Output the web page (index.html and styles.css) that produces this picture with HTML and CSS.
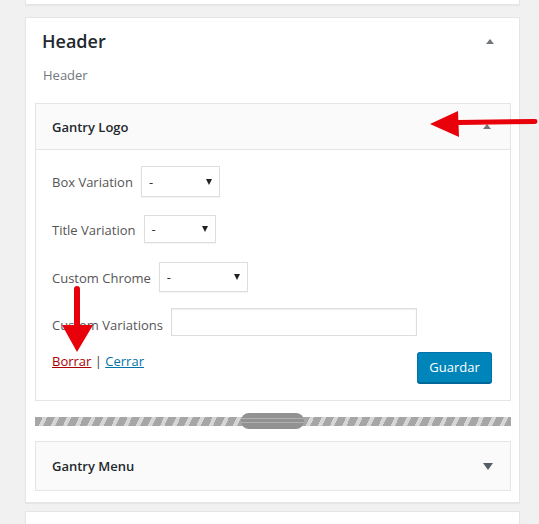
FILE: index.html
```html
<!DOCTYPE html>
<html lang="es">
<head>
<meta charset="UTF-8" />
  <meta name="viewport" content="width=device-width, initial-scale=1.0"/>
  <title>Widgets | Header</title>
  <link rel="stylesheet" href="styles.css">
</head>
<body>
<div class="page">
  <div class="sidebar">
    <div class="panel panel-stub"></div>

    <div class="panel panel-main">
      <div class="panel-head">
        <h2>Header</h2>
        <span class="arrow-up"></span>
      </div>
      <p class="panel-desc">Header</p>

      <div class="widget">
        <div class="widget-head">
          <h3>Gantry Logo</h3>
          <span class="arrow-up"></span>
        </div>
        <div class="widget-body">
          <div class="field row-1">
            <label>Box Variation</label>
            <div class="select sel-box"><span>-</span><span class="caret"></span></div>
          </div>
          <div class="field row-2">
            <label>Title Variation</label>
            <div class="select sel-title"><span>-</span><span class="caret"></span></div>
          </div>
          <div class="field row-3">
            <label>Custom Chrome</label>
            <div class="select sel-chrome"><span>-</span><span class="caret"></span></div>
          </div>
          <div class="field row-4">
            <label class="low">Custom Variations</label>
            <input type="text" class="text-input">
          </div>
          <div class="actions">
            <div class="links">
              <a href="#" class="delete">Borrar</a> | <a href="#" class="close">Cerrar</a>
            </div>
            <button class="button-primary">Guardar</button>
          </div>
        </div>
      </div>

      <div class="drop-bar"><span class="handle"></span></div>

      <div class="widget">
        <div class="widget-head closed">
          <h3>Gantry Menu</h3>
          <span class="arrow-down"></span>
        </div>
      </div>
    </div>

    <div class="panel panel-next"></div>
  </div>

  <!-- annotation arrows drawn over the screenshot -->
  <svg class="annotations" width="539" height="524" viewBox="0 0 539 524">
    <line x1="458" y1="122.5" x2="535" y2="121.5" stroke="#e8000b" stroke-width="5" stroke-linecap="round"/>
    <polygon points="430,124 458,111 459,137" fill="#e8000b"/>
    <line x1="77" y1="289" x2="77" y2="328" stroke="#e8000b" stroke-width="6" stroke-linecap="round"/>
    <polygon points="62,325 93,325 77,352" fill="#e8000b"/>
  </svg>
</div>
</body>
</html>
```

FILE: styles.css
```css
* {
  box-sizing: border-box;
}
body {
  margin: 0;
  background: #f1f1f1;
  font-family: "Open Sans", "Noto Sans", sans-serif;
  font-size: 13px;
  color: #444;
}
.page {
  position: relative;
  width: 539px;
  height: 524px;
  overflow: hidden;
}
.sidebar {
  margin-left: 25px;
  width: 495px;
}
.panel {
  background: #fff;
  border: 1px solid #e5e5e5;
  box-shadow: 0 1px 1px rgba(0,0,0,0.04);
}
.panel-stub {
  height: 5px;
  border-top: none;
}
.panel-main {
  margin-top: 12px;
  padding: 11px 8px 11px 9px;
}
.panel-next {
  margin-top: 8px;
  height: 40px;
}
.panel-head {
  display: flex;
  justify-content: space-between;
  align-items: center;
  padding: 0 17px 0 7px;
}
.panel-head h2 {
  margin: 0;
  font-size: 18px;
  line-height: 25px;
  font-weight: 600;
  color: #23282d;
}
.panel-desc {
  margin: 11px 0 0;
  padding-left: 8px;
  line-height: 20px;
  color: #72777c;
}
.arrow-up {
  width: 0;
  height: 0;
  border-left: 4px solid transparent;
  border-right: 4px solid transparent;
  border-bottom: 5px solid #72777c;
}
.arrow-down {
  width: 0;
  height: 0;
  border-left: 5px solid transparent;
  border-right: 5px solid transparent;
  border-top: 7px solid #555d66;
}
.widget {
  margin-top: 18px;
  border: 1px solid #e5e5e5;
  background: #fff;
}
.widget-head {
  display: flex;
  justify-content: space-between;
  align-items: center;
  height: 46px;
  padding: 0 19px 0 16px;
  background: #fafafa;
  border-bottom: 1px solid #e5e5e5;
}
.widget-head.closed {
  height: 48px;
  border-bottom: none;
  padding-right: 17px;
}
.widget-head h3 {
  margin: 0;
  font-size: 13px;
  font-weight: 600;
  color: #23282d;
}
.widget-body {
  padding: 16px 18px 17px 16px;
}
.field {
  display: flex;
  align-items: center;
  gap: 8px;
}
.field label {
  color: #555;
  padding-top: 1px;
}
.field label.low {
  padding-top: 6px;
}
.row-1 { height: 31px; margin-bottom: 18px; }
.row-2 { height: 28px; margin-bottom: 19px; }
.row-3 { height: 30px; margin-bottom: 16px; }
.row-4 { height: 28px; margin-bottom: 16px; }
.select {
  display: flex;
  justify-content: space-between;
  align-items: center;
  height: 100%;
  padding: 0 7px 0 7px;
  border: 1px solid #ddd;
  background: #fff;
  box-shadow: 0 1px 1px rgba(0,0,0,0.04);
  color: #333;
}
.sel-box { width: 79px; }
.sel-title { width: 72px; }
.sel-chrome { width: 89px; }
.caret {
  width: 0;
  height: 0;
  border-left: 3px solid transparent;
  border-right: 3px solid transparent;
  border-top: 6px solid #222;
}
.text-input {
  width: 246px;
  height: 28px;
  margin: 0;
  border: 1px solid #ddd;
  box-shadow: inset 0 1px 2px rgba(0,0,0,0.07);
  background: #fff;
}
.actions {
  display: flex;
  justify-content: space-between;
  align-items: flex-start;
}
.links {
  margin-top: 0;
  line-height: 18px;
  color: #444;
}
.links a {
  text-decoration: underline;
}
.links .delete {
  color: #a00;
}
.links .close {
  color: #0073aa;
}
.button-primary {
  width: 75px;
  height: 31px;
  margin: 0;
  padding: 0 10px 1px;
  font-family: inherit;
  font-size: 13px;
  color: #fff;
  background: #0085ba;
  border: 1px solid #0073aa;
  border-bottom-color: #006799;
  border-radius: 3px;
  box-shadow: 0 1px 0 #006799;
}
.drop-bar {
  position: relative;
  margin-top: 16px;
  height: 9px;
  background: repeating-linear-gradient(115deg, #a6a6a6 0 7px, #d6d6d6 7px 11px);
}
.handle {
  position: absolute;
  left: 206px;
  top: -4px;
  width: 63px;
  height: 16px;
  border-radius: 8px;
  background-image: linear-gradient(#929292 0 5px, #b0b0b0 5px 6px, #929292 6px 9px, #b0b0b0 9px 10px, #929292 10px);
}
.drop-bar + .widget {
  margin-top: 15px;
}
.annotations {
  position: absolute;
  left: 0;
  top: 0;
  pointer-events: none;
}
```
